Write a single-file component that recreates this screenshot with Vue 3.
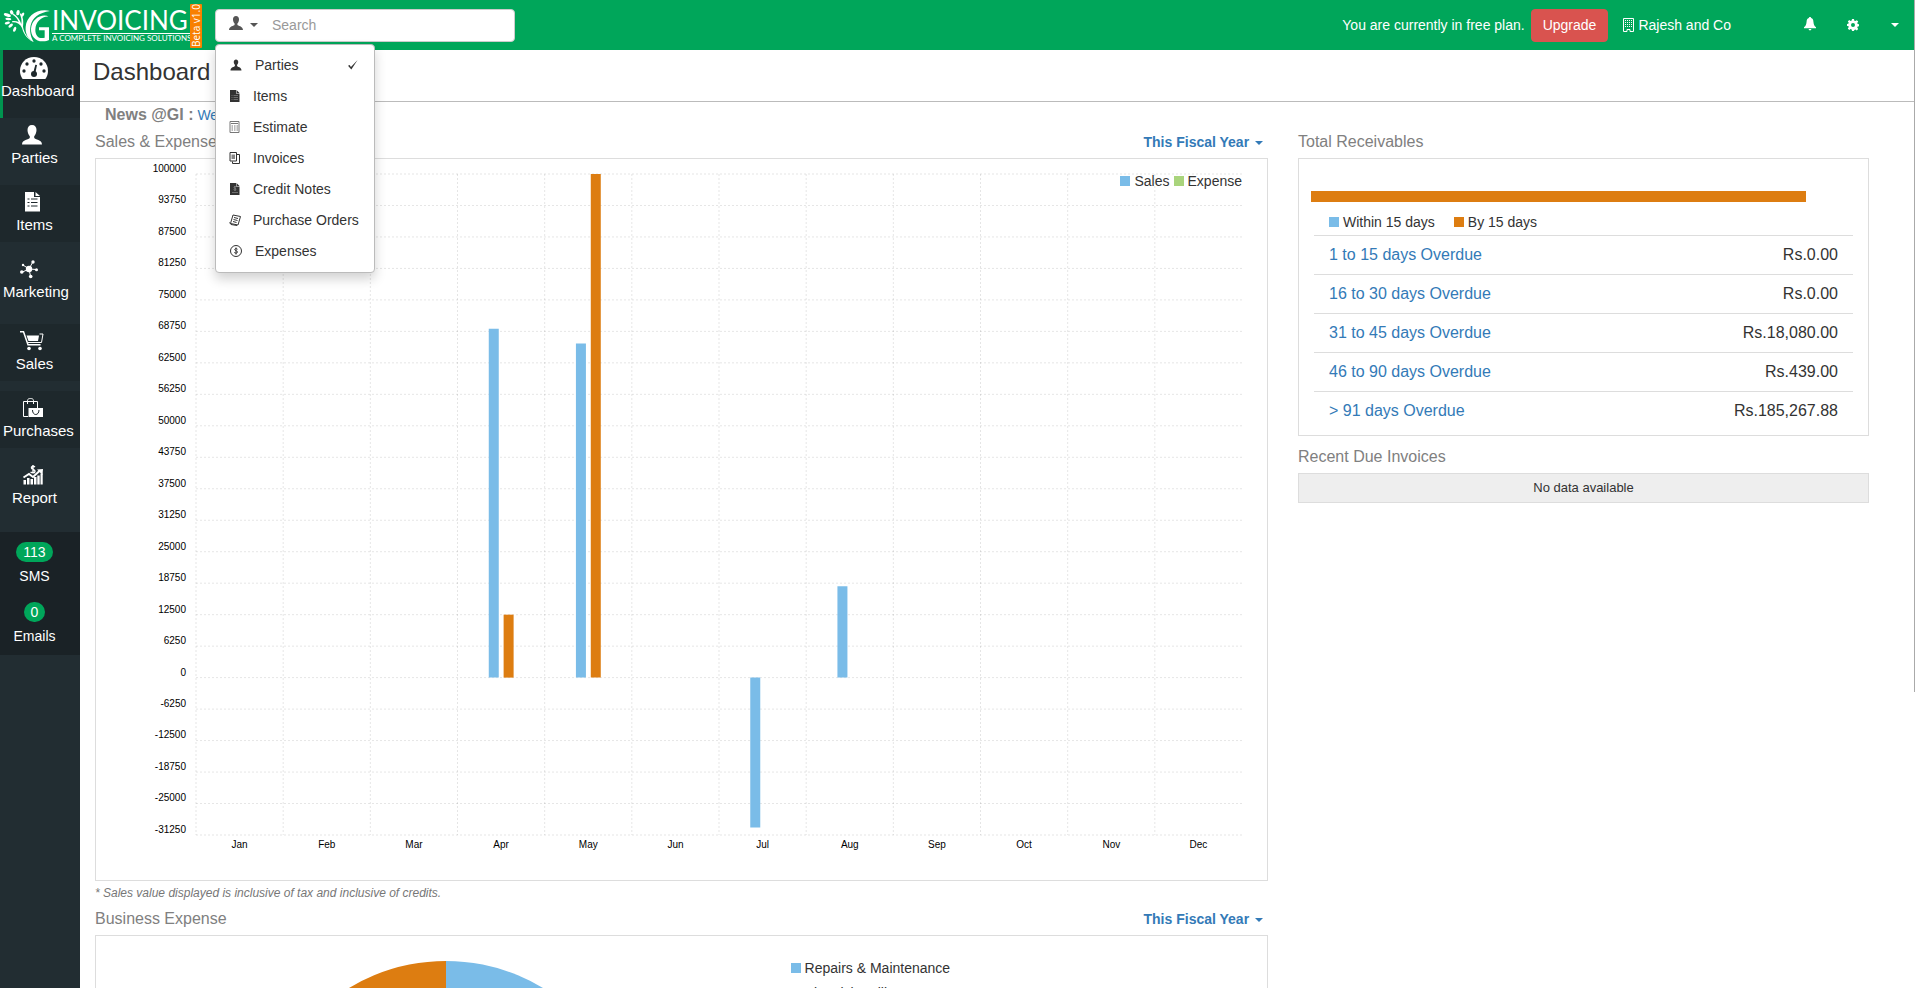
<script setup>
import { ref } from 'vue'

const search = ref('')

const nav = [
  { key: 'dashboard', label: 'Dashboard', tone: 'active' },
  { key: 'parties', label: 'Parties', tone: '' },
  { key: 'items', label: 'Items', tone: 'dark' },
  { key: 'marketing', label: 'Marketing', tone: 'tall' },
  { key: 'sales', label: 'Sales', tone: 'dark' },
  { key: 'purchases', label: 'Purchases', tone: 'dark' },
  { key: 'report', label: 'Report', tone: '' }
]

const scopes = [
  { key: 'parties', label: 'Parties', selected: true, wide: true },
  { key: 'items', label: 'Items' },
  { key: 'estimate', label: 'Estimate' },
  { key: 'invoices', label: 'Invoices' },
  { key: 'credit', label: 'Credit Notes' },
  { key: 'orders', label: 'Purchase Orders' },
  { key: 'expenses', label: 'Expenses', wide: true }
]

const months = ['Jan', 'Feb', 'Mar', 'Apr', 'May', 'Jun', 'Jul', 'Aug', 'Sep', 'Oct', 'Nov', 'Dec']
const top = 100000
const step = 6250
const rows = 21
const ticks = Array.from({ length: rows + 1 }, (_, i) => top - i * step)

const values = [
  { month: 3, series: 'sales', value: 69270 },
  { month: 3, series: 'expense', value: 12500 },
  { month: 4, series: 'sales', value: 66350 },
  { month: 4, series: 'expense', value: 100000 },
  { month: 6, series: 'sales', value: -29750 },
  { month: 7, series: 'sales', value: 18150 }
]

const xOf = (i) => (i / months.length) * 100 + '%'
const yOf = (v) => ((top - v) / (step * rows)) * 100 + '%'
const barX = (b) => ((b.month + 0.5) / months.length) * 100 + (b.series === 'sales' ? -0.7 : 0.72) + '%'

const overdue = [
  { label: '1 to 15 days Overdue', amount: 'Rs.0.00' },
  { label: '16 to 30 days Overdue', amount: 'Rs.0.00' },
  { label: '31 to 45 days Overdue', amount: 'Rs.18,080.00' },
  { label: '46 to 90 days Overdue', amount: 'Rs.439.00' },
  { label: '> 91 days Overdue', amount: 'Rs.185,267.88' }
]
</script>

<template>
  <div class="app">
    <header class="topbar">
      <a class="brand" href="#" aria-label="G Invoicing">
        <svg class="tree" viewBox="0 0 156 150" fill="#fff">
          <path d="M150 33C112 24 80 48 77 80c-2 22 8 38 24 46-9-16-13-32-9-50 5-22 24-38 58-43z" />
          <path d="M147 50c-20-12-52 6-54 36-1 22 14 39 36 38 8 0 14-2 18-4V82h-30v9h17v22c-16 5-28-4-28-24 1-24 20-41 41-39z" />
          <path d="M101 126C78 116 70 98 66 84 61 72 50 66 36 67l1-4c8-1 14 0 19 3-3-9-9-16-18-22l3-3c11 7 19 18 23 31 2-12-1-22-5-30l4-2c7 12 8 27 6 40 3 17 13 35 32 46z" />
          <ellipse cx="22" cy="45" rx="11" ry="5" transform="rotate(20 22 45)" />
          <ellipse cx="35" cy="37" rx="5" ry="7" transform="rotate(-25 35 37)" />
          <ellipse cx="54" cy="38" rx="5" ry="8" transform="rotate(10 54 38)" />
          <ellipse cx="25" cy="57" rx="9" ry="4" transform="rotate(5 25 57)" />
          <ellipse cx="22" cy="69" rx="8" ry="4" transform="rotate(-12 22 69)" />
          <ellipse cx="32" cy="77" rx="8" ry="4" transform="rotate(-38 32 77)" />
          <ellipse cx="44" cy="88" rx="4" ry="8" transform="rotate(24 44 88)" />
          <ellipse cx="68" cy="44" rx="4" ry="7" transform="rotate(30 68 44)" />
        </svg>
        <span class="brand-text">
          <span class="brand-name">INVOICING</span>
          <span class="brand-tag">A COMPLETE INVOICING SOLUTIONS</span>
        </span>
        <span class="beta">Beta v1.0</span>
      </a>

      <div class="search">
        <button class="scope" type="button" aria-label="Search in" aria-expanded="true">
          <svg class="scope-icon" viewBox="0 0 20 20"><path d="M10 0C7.200 0 5.700 2 5.700 4.800c0 2.500 1 4.700 2.300 6v1.800C7.500 14.300 0 14.500 0 20h20c0-5.500-7.500-5.700-8-7.400v-1.800c1.300-1.300 2.300-3.500 2.300-6C14.300 2 12.800 0 10 0z" /></svg>
          <span class="caret"></span>
        </button>
        <input v-model="search" type="text" placeholder="Search" aria-label="Search" />
        <ul class="menu">
          <li v-for="s in scopes" :key="s.key">
            <a href="#">
              <svg class="menu-icon" :class="{ wide: s.wide }" viewBox="0 0 24 24">
                <path v-if="s.key === 'parties'" d="M12 1C9.500 1 7.500 3 7.500 6c0 2.300.9 4.400 2.300 5.700V14C9 16 1 16.200 1 23h22c0-6.800-8-7-8.800-9v-2.300c1.400-1.300 2.300-3.400 2.300-5.700 0-3-2-5-4.500-5z" />
                <g v-else-if="s.key === 'items'">
                  <path d="M2 0h12v7h7v17H2z" /><path d="M15 0l6 6h-6z" />
                  <path d="M5 11h2m2 0h9M5 15h2m2 0h9M5 19h2m2 0h9" class="cut" />
                </g>
                <g v-else-if="s.key === 'estimate'">
                  <path d="M2 1h18v22H2z" class="line soft" />
                  <path d="M4 5h14M5 10h3m2 0h3m2 0h3M5 14h3m2 0h3m2 0h3M5 18h3m2 0h3m2 0h3" class="line soft" />
                </g>
                <g v-else-if="s.key === 'invoices'">
                  <path d="M2 1h13v17H2zM16 5h5v18H7v-4" class="line" />
                  <path d="M5 5h7v9H5z" class="soft-fill" />
                </g>
                <g v-else-if="s.key === 'credit'">
                  <path d="M2 0h12v7h7v17H2z" /><path d="M15 0l6 6h-6z" />
                  <path d="M14 8c-3-2-5 0-4 1.500s5 1.500 4 3.500-4 1-5 0M12 6v10M6 19h12" class="cut" />
                </g>
                <g v-else-if="s.key === 'orders'">
                  <path d="M8 2l15 3-5 17-15-3zM1 17l3 4 12 2" class="line" />
                  <path d="M10 7l8 2M9 11l8 2M8 15l7 2" class="line" />
                </g>
                <g v-else>
                  <circle cx="12" cy="12" r="11" class="line thin" />
                  <path d="M15 8.500c-3-2.500-6-1-5.500 1s5.500 2 5.500 4.500-4 3-6.500 1M12 5v14" class="line" />
                </g>
              </svg>
              <span>{{ s.label }}</span>
              <svg v-if="s.selected" class="tick" viewBox="0 0 12 12"><path d="M0 7l2-1 1.500 2.500L11.500 0 4 11.500z" /></svg>
            </a>
          </li>
        </ul>
      </div>

      <div class="account">
        <span>You are currently in free plan.</span>
        <button class="upgrade" type="button">Upgrade</button>
        <a class="company" href="#">
          <svg viewBox="0 0 11 14"><path d="M.5.500h10v13H7v-2H4v2H.500z" fill="none" stroke="#fff" /><path d="M2 2.500h7M2 4.500h7M2 6.500h7M2 8.500h7" stroke="#fff" stroke-dasharray="1 1" /></svg>
          <span>Rajesh and Co</span>
        </a>
        <a class="bell" href="#" aria-label="Notifications">
          <svg viewBox="0 0 13 15"><path d="M6.500 0c.7 0 1.200.5 1.200 1.100C9.500 1.700 10 3 10.200 5c.3 3 .8 4.500 2.800 6v1H0v-1c2-1.500 2.500-3 2.800-6C3 3 3.500 1.700 5.300 1.100 5.300.5 5.800 0 6.500 0zM5 13h3c0 2-3 2-3 0z" fill="#fff" /></svg>
        </a>
        <a class="gear" href="#" aria-label="Settings">
          <svg viewBox="0 0 24 24"><path fill="#fff" fill-rule="evenodd" d="M10 0h4l.6 3.300 2.200.9L19.600 2.300l2.800 2.800-1.900 2.800.9 2.100 3.100.6v3.800l-3.100.6-.9 2.200 1.900 2.800-2.800 2.800-2.800-1.900-2.200.9L14 24h-4l-.6-3.200-2.200-.9-2.800 1.900-2.800-2.800 1.900-2.800-.9-2.200L0 14v-4l2.600-.6.9-2.100L1.600 4.900l2.800-2.800 2.800 1.900 2.200-.9zM12 8a4 4 0 1 0 0 8 4 4 0 0 0 0-8z" /></svg>
        </a>
        <button class="more" type="button" aria-label="More"><span class="caret"></span></button>
      </div>
    </header>

    <div class="body">
      <aside class="sidebar">
        <nav>
          <a v-for="n in nav" :key="n.key" href="#" class="nav-item" :class="n.tone">
            <svg v-if="n.key === 'dashboard'" class="nav-icon gauge" viewBox="0 0 84 66">
              <path d="M42 0C18 0 0 18 0 42c0 9 3 17 8 24h68c5-7 8-15 8-24C84 18 66 0 42 0z" fill="#fff" />
              <g fill="#1e282c"><circle cx="12" cy="42" r="5" /><circle cx="21" cy="21" r="5" /><circle cx="42" cy="12" r="5" /><circle cx="63" cy="21" r="5" /><circle cx="72" cy="42" r="5" /><circle cx="42" cy="51" r="9" /><path d="M40 46l6-23 5 1-5 24z" /></g>
            </svg>
            <svg v-else class="nav-icon" viewBox="0 0 20 20" fill="#fff">
              <path v-if="n.key === 'parties'" d="M10 0C7 0 5.500 2 5.500 5c0 2.500 1 5 2.300 6.200v1.600C7 14.800 0 14.500 0 19.500h20c0-5-7-4.700-7.800-6.700v-1.600C13.500 10 14.500 7.500 14.500 5c0-3-1.500-5-4.500-5z" />
              <g v-else-if="n.key === 'items'">
                <path d="M3 0h9v5h6v14.500H3z" /><path d="M13.500 0L18 4h-4.500z" />
                <path d="M5.500 7h2m1.500 0h6.500M5.500 10.500h2m1.500 0h6.500M5.500 14h2m1.500 0h6.500" stroke="#1e282c" />
              </g>
              <g v-else-if="n.key === 'marketing'">
                <path d="M7 10L.5 13M7 10L1 6M7 10l3.500-6.500M7 10l7.500.5M7 10l1.500 7" stroke="#fff" />
                <circle cx="7" cy="10" r="3.200" /><circle cx="-.2" cy="13" r="1.800" /><circle cx="1" cy="6" r="1.200" /><circle cx="11" cy="3" r="1.700" /><circle cx="14.500" cy="10.700" r="1.500" /><circle cx="8.700" cy="17.500" r="1.800" />
              </g>
              <g v-else-if="n.key === 'sales'">
                <path d="M-2 .8h3.500l4.500 13h12.500" fill="none" stroke="#fff" stroke-width="1.500" />
                <path d="M4.500 4.500h12.500L16 10H6.500z" /><path d="M17.500 3h3.500L19.500 11.500H6" fill="none" stroke="#fff" />
                <circle cx="7" cy="17.500" r="1.800" /><circle cx="18" cy="17.500" r="1.800" />
              </g>
              <g v-else-if="n.key === 'purchases'">
                <path d="M6 18.500H1.500v-15h14V10M5.500 6V2.500C5.500 1 7 .5 8.500 .5s3 .5 3 2V6" fill="none" stroke="#fff" />
                <path d="M6.500 10H21v9H6.500z" /><path d="M10.500 12c0 6 6.500 6 6.500 0" fill="none" stroke="#1e282c" />
              </g>
              <g v-else transform="translate(1 0)">
                <path d="M.5 15h2.500v4.500H.5zM4 13h2.500v6.500H4zM7.500 14h2.500v5.500H7.500zM11 12h2.500v7.500H11zM14.300 10.500h2.400v9h-2.400zM17.500 8.500h2.200v11h-2.200z" />
                <path d="M.5 12.500L6 9l4 3 7-6.500" fill="none" stroke="#fff" stroke-width="2" /><path d="M14 4.500l6-.5-.5 6z" />
                <path d="M12 2c-2-1.500-4-.5-3.500 1s4 1.500 3.500 3.500-3 1.500-4.500.5M10 0v8.500" fill="none" stroke="#fff" stroke-width="1.400" />
              </g>
            </svg>
            <span class="nav-label">{{ n.label }}</span>
          </a>
        </nav>
        <div class="counters">
          <div class="counter"><span class="badge">113</span><span>SMS</span></div>
          <div class="counter"><span class="badge">0</span><span>Emails</span></div>
        </div>
      </aside>

      <main class="content">
        <h1>Dashboard</h1>
        <p class="news"><strong>News @GI :</strong> <a href="#">Welcome</a></p>

        <div class="columns">
          <div class="column">
            <section>
              <div class="head">
                <h2>Sales &amp; Expense</h2>
                <button class="period" type="button">This Fiscal Year <span class="caret"></span></button>
              </div>
              <div class="card chart">
                <div class="y-axis"><span v-for="t in ticks" :key="t">{{ t }}</span></div>
                <div class="plot-area">
                  <svg class="plot" role="img" aria-label="Sales and expense by month">
                    <line v-for="t in ticks" :key="'y' + t" class="grid" x1="0" x2="100%" :y1="yOf(t)" :y2="yOf(t)" />
                    <line v-for="i in months.length" :key="'x' + i" class="grid" :x1="xOf(i - 1)" :x2="xOf(i - 1)" y1="0" y2="100%" />
                    <line v-for="(b, i) in values" :key="i" :class="['bar', b.series]" :x1="barX(b)" :x2="barX(b)" :y1="yOf(0)" :y2="yOf(b.value)" />
                  </svg>
                  <div class="x-axis"><span v-for="m in months" :key="m">{{ m }}</span></div>
                  <div class="legend chart-legend">
                    <span><i class="swatch blue"></i>Sales</span><span><i class="swatch green"></i>Expense</span>
                  </div>
                </div>
              </div>
              <p class="note">* Sales value displayed is inclusive of tax and inclusive of credits.</p>
            </section>

            <section>
              <div class="head">
                <h2>Business Expense</h2>
                <button class="period" type="button">This Fiscal Year <span class="caret"></span></button>
              </div>
              <div class="card expense">
                <div class="pie-box">
                  <svg class="pie" viewBox="0 0 376 376" role="img" aria-label="Business expense breakdown">
                    <path d="M188 0a188 188 0 0 1 0 376z" fill="#7abce8" />
                    <path d="M188 0a188 188 0 0 0 0 376z" fill="#dd7d11" />
                  </svg>
                </div>
                <ul class="pie-legend">
                  <li><i class="swatch blue"></i>Repairs &amp; Maintenance</li>
                  <li><i class="swatch orange"></i>Electricity Bill</li>
                </ul>
              </div>
            </section>
          </div>

          <div class="column">
            <section>
              <div class="head"><h2>Total Receivables</h2></div>
              <div class="card receivables">
                <div class="meter"></div>
                <div class="legend due-legend">
                  <span><i class="swatch blue"></i>Within 15 days</span><span><i class="swatch orange"></i>By 15 days</span>
                </div>
                <table>
                  <tbody>
                    <tr v-for="o in overdue" :key="o.label">
                      <td><a href="#">{{ o.label }}</a></td>
                      <td class="amount">{{ o.amount }}</td>
                    </tr>
                  </tbody>
                </table>
              </div>
            </section>
            <section>
              <div class="head due"><h2>Recent Due Invoices</h2></div>
              <div class="empty">No data available</div>
            </section>
          </div>
        </div>
      </main>
    </div>
    <div class="scroll-thumb"></div>
  </div>
</template>

<style>
body {
  margin: 0;
}
</style>

<style scoped>
* {
  box-sizing: border-box;
}
.app {
  position: relative;
  display: flex;
  flex-direction: column;
  height: 100vh;
  overflow: hidden;
  background: #fff;
  color: #333;
  font: 14px/20px "Liberation Sans", Arial, sans-serif;
}
a {
  color: #337ab7;
  text-decoration: none;
}
button {
  font: inherit;
  border: 0;
  padding: 0;
  background: none;
  color: inherit;
}
h1, h2, p, ul {
  margin: 0;
  padding: 0;
  font-weight: 400;
  list-style: none;
}
.caret {
  display: inline-block;
  border: 4px solid transparent;
  border-top-color: currentColor;
  border-bottom: 0;
  vertical-align: middle;
}

.topbar {
  flex: none;
  display: flex;
  align-items: center;
  height: 50px;
  background: #00a65a;
  color: #fff;
}
.brand {
  display: flex;
  width: 215px;
  height: 50px;
  color: #fff;
}
.tree {
  flex: none;
  width: 52px;
  height: 50px;
}
.brand-text {
  display: flex;
  flex-direction: column;
  width: 138px;
  margin-top: 8px;
  font-family: Lato, sans-serif;
  white-space: nowrap;
}
.brand-name {
  font-size: 26px;
  line-height: 25px;
  border-bottom: 1px solid #fff;
}
.brand-tag {
  font-size: 8px;
  line-height: 9px;
}
.beta {
  width: 12px;
  height: 44px;
  margin-top: 4px;
  border-radius: 1px;
  background: #f88000;
  font: 10px/12px "Open Sans", sans-serif;
  text-align: center;
  writing-mode: vertical-rl;
  transform: rotate(180deg);
  white-space: nowrap;
}

.search {
  position: relative;
  display: flex;
  width: 300px;
  height: 33px;
  border: 1px solid #ccc;
  border-radius: 4px;
  background: #fff;
}
.scope {
  display: flex;
  align-items: center;
  gap: 7px;
  padding: 0 14px 0 13px;
  color: #555;
}
.scope-icon {
  width: 14px;
  height: 14px;
  margin-bottom: 4px;
  fill: #555;
}
.search input {
  flex: 1;
  min-width: 0;
  border: 0;
  outline: 0;
  padding: 0;
  background: none;
  font: inherit;
  color: #333;
}
.search input::placeholder {
  color: #999;
}
.menu {
  position: absolute;
  z-index: 5;
  top: 34px;
  left: -1px;
  width: 160px;
  padding: 5px 0;
  border: 1px solid #bbb;
  border-radius: 4px;
  background: #fff;
  box-shadow: 0 6px 12px rgba(0, 0, 0, 0.18);
}
.menu a {
  display: flex;
  align-items: center;
  gap: 12px;
  height: 31px;
  padding: 0 16px 0 13px;
  color: #333;
  white-space: nowrap;
}
.menu-icon {
  flex: none;
  width: 12px;
  height: 12px;
  fill: #333;
}
.menu-icon.wide {
  width: 14px;
}
.line {
  fill: none;
  stroke: #333;
  stroke-width: 2;
}
.line.soft {
  stroke: #777;
}
.soft-fill {
  fill: #888;
}
.cut {
  fill: none;
  stroke: #aaa;
  stroke-width: 1;
}
.tick {
  width: 10px;
  height: 10px;
  margin-left: auto;
  fill: #333;
}

.account {
  display: flex;
  align-items: center;
  margin-left: auto;
  padding-right: 16px;
}
.account svg {
  display: block;
}
.upgrade {
  height: 33px;
  margin: 0 15px 0 6px;
  padding: 0 11px 1px;
  border: 1px solid #d9534f;
  border-radius: 4px;
  background: #d9534f;
  color: #fff;
}
.company {
  display: flex;
  align-items: center;
  gap: 4px;
  margin-right: 73px;
  color: #fff;
}
.company svg {
  width: 11px;
  height: 14px;
}
.bell svg {
  width: 12px;
  height: 14px;
  margin-bottom: 2px;
}
.gear {
  margin: 0 32px 0 31px;
}
.gear svg {
  width: 12px;
  height: 12px;
}
.more {
  display: flex;
}

.body {
  flex: 1;
  display: flex;
  min-height: 0;
}
.sidebar {
  flex: none;
  width: 80px;
  background: #222d32;
}
.nav-item {
  display: block;
  height: 57px;
  margin-bottom: 10px;
  padding: 7px 14px 0 3px;
  color: #fff;
  font-size: 15px;
  text-align: center;
  white-space: nowrap;
}
.nav-item.dark {
  background: #1e282c;
}
.nav-item.active {
  height: 68px;
  margin-bottom: 0;
  padding-left: 0;
  border-left: 3px solid #00944f;
  background: #1e282c;
}
.nav-item.tall {
  height: 62px;
}
.nav-icon {
  display: block;
  width: 20px;
  height: 20px;
  margin: 0 0 3px 19px;
  overflow: visible;
}
.nav-icon.gauge {
  width: 28px;
  height: 22px;
  margin: 0 0 2px 17px;
}
.nav-label {
  display: block;
}
.nav-item.active .nav-label {
  margin-left: -2px;
}
.counters {
  display: flex;
  flex-direction: column;
  gap: 16px;
  margin-top: 17px;
  padding: 10px 11px 9px 0;
  background: #1a2226;
  color: #fff;
}
.counter {
  display: flex;
  flex-direction: column;
  align-items: center;
  gap: 4px;
}
.badge {
  padding: 0 7px;
  border-radius: 10px;
  background: #00a65a;
}

.content {
  flex: 1;
  min-width: 0;
  overflow-y: auto;
  scrollbar-width: none;
}
h1 {
  height: 52px;
  padding: 8px 13px 0;
  border-bottom: 1px solid #bbb;
  font-size: 24px;
  line-height: 28px;
}
.news {
  padding: 3px 25px 1px;
  color: #808080;
}
.news strong {
  font-size: 16px;
}
.columns {
  display: grid;
  grid-template-columns: minmax(0, 1173fr) minmax(0, 571fr);
  gap: 30px;
  padding: 0 46px 0 15px;
}
.head {
  display: flex;
  align-items: center;
  justify-content: space-between;
  height: 32px;
  padding-bottom: 1px;
}
.head.due {
  height: 37px;
  padding: 5px 0 1px;
}
h2 {
  color: #808080;
  font-size: 16px;
  line-height: 20px;
}
.period {
  padding-right: 5px;
  color: #337ab7;
  font-weight: 700;
}
.period .caret {
  margin-left: 2px;
}
.card {
  border: 1px solid #ddd;
}
.chart {
  display: flex;
  height: 723px;
  padding: 15px 25px 0 0;
}
.y-axis {
  display: flex;
  flex-direction: column;
  justify-content: space-between;
  width: 90px;
  height: 675px;
  margin: -12px 10px 0 0;
  color: #000;
  font-size: 10px;
  line-height: 14px;
  text-align: right;
}
.plot-area {
  position: relative;
  flex: 1;
}
.plot {
  display: block;
  width: 100%;
  height: 661px;
  overflow: visible;
}
.grid {
  stroke: rgba(0, 0, 0, 0.1);
  stroke-dasharray: 2 2;
}
.bar {
  stroke-width: 10;
}
.bar.sales {
  stroke: #7abce8;
}
.bar.expense {
  stroke: #dd7d11;
}
.x-axis {
  display: flex;
  color: #000;
  font-size: 10px;
}
.x-axis span {
  flex: 1;
  text-align: center;
}
.legend {
  display: flex;
}
.chart-legend {
  position: absolute;
  top: -3px;
  right: 0;
  gap: 4px;
}
.swatch {
  display: inline-block;
  width: 10px;
  height: 10px;
  margin-right: 4px;
}
.blue {
  background: #7abce8;
}
.green {
  background: #a9d47c;
}
.orange {
  background: #dd7d11;
}
.note {
  padding-top: 3px;
  color: #777;
  font-size: 12px;
  font-style: italic;
  line-height: 19px;
}
.expense {
  display: flex;
  padding-top: 22px;
}
.pie-box {
  width: 60%;
  padding: 3px 0 25px;
}
.pie {
  display: block;
  width: 376px;
  height: 376px;
  margin-left: 162px;
}
.pie-legend {
  margin-left: -8px;
}
.pie-legend li {
  height: 25px;
}
.receivables {
  height: 278px;
  padding: 32px 15px 0;
}
.meter {
  width: calc(100% - 44px);
  height: 11px;
  margin-left: -3px;
  background: #dd7d11;
}
.due-legend {
  gap: 19px;
  height: 33px;
  padding: 10px 15px 0;
}
table {
  width: 100%;
  border-collapse: collapse;
  font-size: 16px;
}
td {
  height: 39px;
  padding: 0 15px;
  border-top: 1px solid #ddd;
}
.amount {
  text-align: right;
}
.empty {
  height: 30px;
  border: 1px solid #ddd;
  background: #eee;
  font-size: 13px;
  line-height: 28px;
  text-align: center;
}
.scroll-thumb {
  position: absolute;
  top: 0;
  right: 0;
  width: 1px;
  height: 70%;
  background: #aaa;
}
</style>
